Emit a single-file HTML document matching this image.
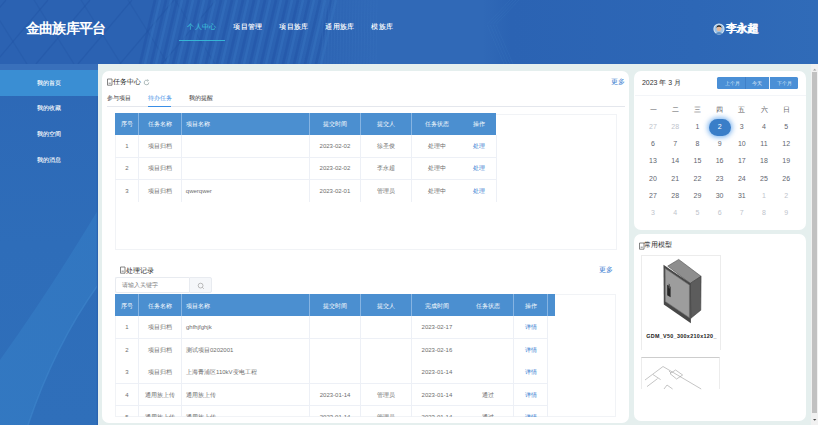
<!DOCTYPE html>
<html><head><meta charset="utf-8">
<style>
*{margin:0;padding:0;box-sizing:border-box}
html,body{width:818px;height:425px;overflow:hidden;background:#e5efee;font-family:"Liberation Sans",sans-serif;position:relative}
.abs{position:absolute}
.t{position:absolute;white-space:nowrap;line-height:1}
.ct{position:absolute;white-space:nowrap;line-height:1;text-align:center;transform:translateX(-50%)}
.card{position:absolute;background:#fff;border-radius:7px}
</style></head><body>
<div class="abs" style="left:0;top:0;width:818px;height:64px;overflow:hidden;background:linear-gradient(90deg,#2b62b2 0%,#2b62b2 36%,#3069b7 46%,#3069b7 59%,#2b63b3 62.5%,#2d67b6 85%,#306bb8 100%)">
<svg class="abs" style="left:0;top:0" width="818" height="64">
 <g fill="none">
  <path d="M-90 64 L-36 0 M-48 64 L6 0 M-6 64 L48 0 M36 64 L90 0 M78 64 L132 0 M120 64 L174 0 M162 64 L216 0" stroke="#2153a3" stroke-width="1.2" opacity="0.4"/>
  <path d="M-60 0 L-20 64 M-13 0 L27 64 M34 0 L74 64 M81 0 L121 64 M128 0 L168 64 M175 0 L215 64" stroke="#2153a3" stroke-width="1.2" opacity="0.32"/>
  <path d="M140 64 L155 0 M151 64 L166 0 M162 64 L177 0 M173 64 L188 0 M184 64 L199 0 M195 64 L210 0 M206 64 L221 0 M217 64 L232 0 M228 64 L243 0 M239 64 L254 0 M250 64 L265 0 M261 64 L276 0 M272 64 L287 0 M283 64 L298 0 M294 64 L309 0 M305 64 L320 0 M316 64 L331 0" stroke="#2152a3" stroke-width="2.6" opacity="0.45"/>
  <path d="M145 64 L160 0 M156 64 L171 0 M167 64 L182 0 M178 64 L193 0 M189 64 L204 0 M200 64 L215 0 M211 64 L226 0 M222 64 L237 0 M233 64 L248 0 M244 64 L259 0 M255 64 L270 0 M266 64 L281 0 M277 64 L292 0 M288 64 L303 0 M299 64 L314 0 M310 64 L325 0 M321 64 L336 0" stroke="#3876c0" stroke-width="2.5" opacity="0.45"/>
  <path d="M322 64 L323 0 M325 64 L326 0 M328 64 L329 0 M331 64 L332 0 M334 64 L335 0 M337 64 L338 0 M340 64 L341 0 M343 64 L344 0 M346 64 L347 0 M349 64 L350 0 M352 64 L353 0 M355 64 L356 0 M358 64 L359 0 M361 64 L362 0 M364 64 L365 0 M367 64 L368 0 M370 64 L371 0 M373 64 L374 0 M376 64 L377 0" stroke="#3a74be" stroke-width="0.8" opacity="0.45"/>
  <path d="M510 0 L487 24.5 L504 64 M513 0 L490 24.5 L507 64 M516 0 L493 24.5 L510 64 M519 0 L496 24.5 L513 64" stroke="#3a74be" stroke-width="0.8" opacity="0.4"/>
 </g>
</svg></div>
<div class="t" style="left:26px;top:20.8px;font-size:14px;color:#fff;letter-spacing:-0.8px;font-weight:bold">金曲族库平台</div>
<div class="t" style="left:187.3px;top:24px;font-size:7.1px;color:#3cb8d8;letter-spacing:0.4px;font-weight:500;text-shadow:0 0 0.5px rgba(60,184,216,0.7)">个人中心</div>
<div class="t" style="left:233.3px;top:24px;font-size:7.1px;color:#fff;letter-spacing:0.4px;font-weight:500;text-shadow:0 0 0.5px rgba(255,255,255,0.6)">项目管理</div>
<div class="t" style="left:279.3px;top:24px;font-size:7.1px;color:#fff;letter-spacing:0.4px;font-weight:500;text-shadow:0 0 0.5px rgba(255,255,255,0.6)">项目族库</div>
<div class="t" style="left:325.3px;top:24px;font-size:7.1px;color:#fff;letter-spacing:0.4px;font-weight:500;text-shadow:0 0 0.5px rgba(255,255,255,0.6)">通用族库</div>
<div class="t" style="left:371.3px;top:24px;font-size:7.1px;color:#fff;letter-spacing:0.4px;font-weight:500;text-shadow:0 0 0.5px rgba(255,255,255,0.6)">模族库</div>
<div class="abs" style="left:179px;top:40px;width:46px;height:1.2px;background:#35b5d5"></div>
<svg class="abs" style="left:713px;top:23px" width="12" height="12" viewBox="0 0 12 12">
<circle cx="6" cy="6" r="5.6" fill="#d8e6f2"/>
<circle cx="6" cy="6" r="4.6" fill="#9ec3e6"/>
<path d="M2.4 11 Q6 7.2 9.6 11 Z" fill="#5b8fc4"/>
<ellipse cx="6" cy="5.6" rx="2.3" ry="2.6" fill="#e8b896"/>
<path d="M3.5 5 Q3.6 2.2 6 2.3 Q8.5 2.2 8.5 5 Q7.5 3.6 6 3.8 Q4.5 3.6 3.5 5 Z" fill="#222"/>
</svg>
<div class="t" style="left:725.8px;top:23px;font-size:10.5px;color:#fff;font-weight:bold;letter-spacing:-0.3px;text-shadow:0.35px 0 0 #fff">李永超</div>
<svg class="abs" style="left:0;top:64px" width="98" height="361" viewBox="0 64 98 361">
<defs><linearGradient id="sg" x1="0" y1="0" x2="0" y2="1"><stop offset="0" stop-color="#2d68b6"/><stop offset="0.5" stop-color="#2e6db9"/><stop offset="1" stop-color="#2f6fba"/></linearGradient>
<linearGradient id="bg2" x1="0" y1="1" x2="1" y2="0"><stop offset="0" stop-color="#3379c2"/><stop offset="1" stop-color="#3277c1"/></linearGradient></defs>
<rect x="0" y="64" width="98" height="361" fill="url(#sg)"/>
<path d="M0 360 Q50 290 98 210 L98 285 Q55 345 28 425 L0 425 Z" fill="url(#bg2)" opacity="0.9"/>
<path d="M28 425 Q55 345 98 285" fill="none" stroke="#3d86cc" stroke-width="1.5" opacity="0.6"/>
<rect x="96.8" y="64" width="1.2" height="361" fill="#2a63b0"/>
</svg>
<div class="abs" style="left:0px;top:63.6px;width:98px;height:6.2px;background:#3970bb"></div>
<div class="abs" style="left:0px;top:70px;width:98px;height:25.6px;background:#3a8ed3"></div>
<div class="t" style="left:37px;top:79.8px;font-size:6.3px;color:#fff;font-weight:500;text-shadow:0 0 0.4px rgba(255,255,255,0.6)">我的首页</div>
<div class="t" style="left:37px;top:105.4px;font-size:6.3px;color:#fff;font-weight:500;text-shadow:0 0 0.4px rgba(255,255,255,0.6)">我的收藏</div>
<div class="t" style="left:37px;top:131.0px;font-size:6.3px;color:#fff;font-weight:500;text-shadow:0 0 0.4px rgba(255,255,255,0.6)">我的空间</div>
<div class="t" style="left:37px;top:156.60000000000002px;font-size:6.3px;color:#fff;font-weight:500;text-shadow:0 0 0.4px rgba(255,255,255,0.6)">我的消息</div>
<div class="card" style="left:102px;top:71px;width:527.3px;height:351.6px"></div>
<svg class="abs" style="left:106px;top:78px" width="8" height="8" viewBox="0 0 8 8">
<path d="M1.5 1 H6 V7.2 H1.5 Z" fill="none" stroke="#666" stroke-width="0.8"/>
<path d="M2.6 5.2 H4.8" stroke="#666" stroke-width="0.8"/>
</svg>
<div class="t" style="left:113.2px;top:78px;font-size:7.2px;color:#2a2a2a;font-weight:500">任务中心</div>
<svg class="abs" style="left:142.8px;top:78.8px" width="7" height="7" viewBox="0 0 7 7">
<path d="M5.8 3.5 A2.3 2.3 0 1 1 4.6 1.5" fill="none" stroke="#9aa" stroke-width="0.8"/>
<path d="M4 0.6 L5.6 1.4 L4.4 2.6" fill="none" stroke="#9aa" stroke-width="0.7"/>
</svg>
<div class="t" style="left:611.4px;top:78px;font-size:7px;color:#3a7fd0;">更多</div>
<div class="t" style="left:106.8px;top:94.5px;font-size:6px;color:#333;">参与项目</div>
<div class="t" style="left:147.7px;top:94.5px;font-size:6px;color:#3a8ee6;">待办任务</div>
<div class="t" style="left:188.6px;top:94.5px;font-size:6px;color:#333;">我的提醒</div>
<div class="abs" style="left:106.8px;top:106px;width:518.4px;height:1px;background:#e4e7ed"></div>
<div class="abs" style="left:147.7px;top:105.5px;width:23.7px;height:1.5px;background:#3a8ee6"></div>
<div class="abs" style="left:115.3px;top:113.5px;width:501.4px;height:136.8px;border:1px solid #f1f3f6"></div>
<div class="abs" style="left:115.2px;top:113.2px;width:381.3px;height:21.5px;background:#4b8fd0"></div>
<div class="abs" style="left:138.1px;top:113.2px;width:1px;height:21.5px;background:#86b4e2"></div>
<div class="abs" style="left:180.5px;top:113.2px;width:1px;height:21.5px;background:#86b4e2"></div>
<div class="abs" style="left:308.9px;top:113.2px;width:1px;height:21.5px;background:#86b4e2"></div>
<div class="abs" style="left:359.9px;top:113.2px;width:1px;height:21.5px;background:#86b4e2"></div>
<div class="abs" style="left:410.5px;top:113.2px;width:1px;height:21.5px;background:#86b4e2"></div>
<div class="abs" style="left:461.5px;top:113.2px;width:1px;height:21.5px;#6fa3d8"></div>
<div class="ct" style="left:126.9px;top:121.4px;font-size:6.2px;color:#fff;">序号</div>
<div class="ct" style="left:159.8px;top:121.4px;font-size:6.2px;color:#fff;">任务名称</div>
<div class="t" style="left:185.8px;top:121.4px;font-size:6.2px;color:#fff;">项目名称</div>
<div class="ct" style="left:334.9px;top:121.4px;font-size:6.2px;color:#fff;">提交时间</div>
<div class="ct" style="left:385.7px;top:121.4px;font-size:6.2px;color:#fff;">提交人</div>
<div class="ct" style="left:436.5px;top:121.4px;font-size:6.2px;color:#fff;">任务状态</div>
<div class="ct" style="left:479.25px;top:121.4px;font-size:6.2px;color:#fff;">操作</div>
<div class="ct" style="left:126.9px;top:142.89999999999998px;font-size:6px;color:#6e6e6e;">1</div>
<div class="ct" style="left:159.8px;top:142.89999999999998px;font-size:6px;color:#6e6e6e;">项目归档</div>
<div class="ct" style="left:334.9px;top:142.89999999999998px;font-size:6px;color:#6e6e6e;">2023-02-02</div>
<div class="ct" style="left:385.7px;top:142.89999999999998px;font-size:6px;color:#6e6e6e;">徐圣俊</div>
<div class="ct" style="left:436.5px;top:142.89999999999998px;font-size:6px;color:#6e6e6e;">处理中</div>
<div class="ct" style="left:479.25px;top:142.89999999999998px;font-size:6px;color:#3a80d2;">处理</div>
<div class="abs" style="left:115.2px;top:156.5px;width:381.3px;height:1px;background:#edf0f6"></div>
<div class="ct" style="left:126.9px;top:165.2px;font-size:6px;color:#6e6e6e;">2</div>
<div class="ct" style="left:159.8px;top:165.2px;font-size:6px;color:#6e6e6e;">项目归档</div>
<div class="ct" style="left:334.9px;top:165.2px;font-size:6px;color:#6e6e6e;">2023-02-02</div>
<div class="ct" style="left:385.7px;top:165.2px;font-size:6px;color:#6e6e6e;">李永超</div>
<div class="ct" style="left:436.5px;top:165.2px;font-size:6px;color:#6e6e6e;">处理中</div>
<div class="ct" style="left:479.25px;top:165.2px;font-size:6px;color:#3a80d2;">处理</div>
<div class="abs" style="left:115.2px;top:178.8px;width:381.3px;height:1px;background:#edf0f6"></div>
<div class="ct" style="left:126.9px;top:187.5px;font-size:6px;color:#6e6e6e;">3</div>
<div class="ct" style="left:159.8px;top:187.5px;font-size:6px;color:#6e6e6e;">项目归档</div>
<div class="t" style="left:185.8px;top:187.5px;font-size:6px;color:#6e6e6e;">qwerqwer</div>
<div class="ct" style="left:334.9px;top:187.5px;font-size:6px;color:#6e6e6e;">2023-02-01</div>
<div class="ct" style="left:385.7px;top:187.5px;font-size:6px;color:#6e6e6e;">管理员</div>
<div class="ct" style="left:436.5px;top:187.5px;font-size:6px;color:#6e6e6e;">处理中</div>
<div class="ct" style="left:479.25px;top:187.5px;font-size:6px;color:#3a80d2;">处理</div>
<div class="abs" style="left:138.1px;top:134.7px;width:1px;height:66.9px;background:#edf0f6"></div>
<div class="abs" style="left:180.5px;top:134.7px;width:1px;height:66.9px;background:#edf0f6"></div>
<div class="abs" style="left:308.9px;top:134.7px;width:1px;height:66.9px;background:#edf0f6"></div>
<div class="abs" style="left:359.9px;top:134.7px;width:1px;height:66.9px;background:#edf0f6"></div>
<div class="abs" style="left:410.5px;top:134.7px;width:1px;height:66.9px;background:#edf0f6"></div>
<div class="abs" style="left:496.0px;top:134.7px;width:1px;height:66.9px;background:#edf0f6"></div>
<svg class="abs" style="left:119px;top:266.3px" width="8" height="8" viewBox="0 0 8 8">
<path d="M1.5 1 H6 V7.2 H1.5 Z" fill="none" stroke="#666" stroke-width="0.8"/>
<path d="M2.6 5.2 H4.8" stroke="#666" stroke-width="0.8"/>
</svg>
<div class="t" style="left:598.6px;top:266.2px;font-size:7px;color:#3a80d2;">更多</div>
<div class="t" style="left:126.2px;top:266.5px;font-size:7px;color:#2a2a2a;font-weight:500">处理记录</div>
<div class="abs" style="left:115.3px;top:277.2px;width:73.8px;height:15.8px;border:1px solid #e8ebf0;border-right:none;border-radius:2px 0 0 2px;background:#fff"></div>
<div class="abs" style="left:188.6px;top:277.2px;width:23.9px;height:15.8px;background:#f5f7fa;border:1px solid #e8ebf0;border-radius:0 2px 2px 0"></div>
<div class="t" style="left:122px;top:282px;font-size:6px;color:#808080;">请输入关键字</div>
<svg class="abs" style="left:197px;top:281.5px" width="8" height="8" viewBox="0 0 8 8">
<circle cx="3.6" cy="3.6" r="2.4" fill="none" stroke="#aaa" stroke-width="0.8"/>
<path d="M5.3 5.3 L6.8 6.8" stroke="#aaa" stroke-width="0.8"/>
</svg>
<div class="abs" style="left:115.3px;top:294.0px;width:501.0px;height:123.0px;border:1px solid #f1f3f6"></div>
<div class="abs" style="left:115.2px;top:294.3px;width:439.50000000000006px;height:21.9px;background:#4b8fd0"></div>
<div class="abs" style="left:138.1px;top:294.3px;width:1px;height:21.9px;background:#86b4e2"></div>
<div class="abs" style="left:180.7px;top:294.3px;width:1px;height:21.9px;background:#86b4e2"></div>
<div class="abs" style="left:309.0px;top:294.3px;width:1px;height:21.9px;background:#86b4e2"></div>
<div class="abs" style="left:360.2px;top:294.3px;width:1px;height:21.9px;background:#86b4e2"></div>
<div class="abs" style="left:410.9px;top:294.3px;width:1px;height:21.9px;background:#86b4e2"></div>
<div class="abs" style="left:513.1px;top:294.3px;width:1px;height:21.9px;background:#86b4e2"></div>
<div class="abs" style="left:547.2px;top:294.3px;width:1px;height:21.9px;background:#86b4e2"></div>
<div class="ct" style="left:126.9px;top:302.5px;font-size:6.2px;color:#fff;">序号</div>
<div class="ct" style="left:159.89999999999998px;top:302.5px;font-size:6.2px;color:#fff;">任务名称</div>
<div class="t" style="left:186.0px;top:302.5px;font-size:6.2px;color:#fff;">项目名称</div>
<div class="ct" style="left:335.1px;top:302.5px;font-size:6.2px;color:#fff;">提交时间</div>
<div class="ct" style="left:386.04999999999995px;top:302.5px;font-size:6.2px;color:#fff;">提交人</div>
<div class="ct" style="left:436.95px;top:302.5px;font-size:6.2px;color:#fff;">完成时间</div>
<div class="ct" style="left:488.05px;top:302.5px;font-size:6.2px;color:#fff;">任务状态</div>
<div class="ct" style="left:530.6500000000001px;top:302.5px;font-size:6.2px;color:#fff;">操作</div>
<div class="abs" style="left:115px;top:316.2px;width:502px;height:101px;overflow:hidden">
<div class="ct" style="left:11.900000000000006px;top:8.2px;font-size:6px;color:#6e6e6e;">1</div>
<div class="ct" style="left:44.89999999999998px;top:8.2px;font-size:6px;color:#6e6e6e;">项目归档</div>
<div class="t" style="left:71.0px;top:8.2px;font-size:6px;color:#6e6e6e;">ghfhjfghjk</div>
<div class="ct" style="left:321.95px;top:8.2px;font-size:6px;color:#6e6e6e;">2023-02-17</div>
<div class="ct" style="left:415.6500000000001px;top:8.2px;font-size:6px;color:#3a80d2;">详情</div>
<div class="abs" style="left:0.20000000000000284px;top:21.8px;width:432.50000000000006px;height:1px;background:#edf0f6"></div>
<div class="ct" style="left:11.900000000000006px;top:30.5px;font-size:6px;color:#6e6e6e;">2</div>
<div class="ct" style="left:44.89999999999998px;top:30.5px;font-size:6px;color:#6e6e6e;">项目归档</div>
<div class="t" style="left:71.0px;top:30.5px;font-size:6px;color:#6e6e6e;">测试项目0202001</div>
<div class="ct" style="left:321.95px;top:30.5px;font-size:6px;color:#6e6e6e;">2023-02-16</div>
<div class="ct" style="left:415.6500000000001px;top:30.5px;font-size:6px;color:#3a80d2;">详情</div>
<div class="ct" style="left:11.900000000000006px;top:53.3px;font-size:6px;color:#6e6e6e;">3</div>
<div class="ct" style="left:44.89999999999998px;top:53.3px;font-size:6px;color:#6e6e6e;">项目归档</div>
<div class="t" style="left:71.0px;top:53.3px;font-size:6px;color:#6e6e6e;">上海青浦区110kV变电工程</div>
<div class="ct" style="left:321.95px;top:53.3px;font-size:6px;color:#6e6e6e;">2023-01-14</div>
<div class="ct" style="left:415.6500000000001px;top:53.3px;font-size:6px;color:#3a80d2;">详情</div>
<div class="abs" style="left:0.20000000000000284px;top:66.9px;width:432.50000000000006px;height:1px;background:#edf0f6"></div>
<div class="ct" style="left:11.900000000000006px;top:75.60000000000001px;font-size:6px;color:#6e6e6e;">4</div>
<div class="ct" style="left:44.89999999999998px;top:75.60000000000001px;font-size:6px;color:#6e6e6e;">通用族上传</div>
<div class="t" style="left:71.0px;top:75.60000000000001px;font-size:6px;color:#6e6e6e;">通用族上传</div>
<div class="ct" style="left:220.10000000000002px;top:75.60000000000001px;font-size:6px;color:#6e6e6e;">2023-01-14</div>
<div class="ct" style="left:271.04999999999995px;top:75.60000000000001px;font-size:6px;color:#6e6e6e;">管理员</div>
<div class="ct" style="left:321.95px;top:75.60000000000001px;font-size:6px;color:#6e6e6e;">2023-01-14</div>
<div class="ct" style="left:373.05px;top:75.60000000000001px;font-size:6px;color:#6e6e6e;">通过</div>
<div class="ct" style="left:415.6500000000001px;top:75.60000000000001px;font-size:6px;color:#3a80d2;">详情</div>
<div class="abs" style="left:0.20000000000000284px;top:89.2px;width:432.50000000000006px;height:1px;background:#edf0f6"></div>
<div class="ct" style="left:11.900000000000006px;top:97.9px;font-size:6px;color:#6e6e6e;">5</div>
<div class="ct" style="left:44.89999999999998px;top:97.9px;font-size:6px;color:#6e6e6e;">通用族上传</div>
<div class="t" style="left:71.0px;top:97.9px;font-size:6px;color:#6e6e6e;">通用族上传</div>
<div class="ct" style="left:220.10000000000002px;top:97.9px;font-size:6px;color:#6e6e6e;">2023-01-14</div>
<div class="ct" style="left:271.04999999999995px;top:97.9px;font-size:6px;color:#6e6e6e;">管理员</div>
<div class="ct" style="left:321.95px;top:97.9px;font-size:6px;color:#6e6e6e;">2023-01-14</div>
<div class="ct" style="left:373.05px;top:97.9px;font-size:6px;color:#6e6e6e;">通过</div>
<div class="ct" style="left:415.6500000000001px;top:97.9px;font-size:6px;color:#3a80d2;">详情</div>
<div class="abs" style="left:0.20000000000000284px;top:111.5px;width:432.50000000000006px;height:1px;background:#edf0f6"></div>
<div class="abs" style="left:23.099999999999994px;top:0px;width:1px;height:120px;background:#edf0f6"></div>
<div class="abs" style="left:65.69999999999999px;top:0px;width:1px;height:120px;background:#edf0f6"></div>
<div class="abs" style="left:194.0px;top:0px;width:1px;height:120px;background:#edf0f6"></div>
<div class="abs" style="left:245.2px;top:0px;width:1px;height:120px;background:#edf0f6"></div>
<div class="abs" style="left:295.9px;top:0px;width:1px;height:120px;background:#edf0f6"></div>
<div class="abs" style="left:398.1px;top:0px;width:1px;height:120px;background:#edf0f6"></div>
<div class="abs" style="left:432.20000000000005px;top:0px;width:1px;height:120px;background:#edf0f6"></div>
</div>
<div class="card" style="left:634px;top:71px;width:172px;height:159.3px"></div>
<div class="t" style="left:641.9px;top:78.5px;font-size:7px;color:#333;">2023 年 3 月</div>
<div class="abs" style="left:717.2px;top:76.9px;width:80.5px;height:11.8px;background:#4a8fd6;border-radius:1.5px"></div>
<div class="abs" style="left:745.0px;top:76.9px;width:0.6px;height:11.8px;background:#3f80c8"></div>
<div class="abs" style="left:769.0px;top:76.9px;width:0.8px;height:11.8px;background:#e9f1fa"></div>
<div class="ct" style="left:732.1px;top:80.6px;font-size:5px;color:#d8e6f6;">上个月</div>
<div class="ct" style="left:757.2px;top:80.6px;font-size:5px;color:#eef4fb;">今天</div>
<div class="ct" style="left:784.4px;top:80.6px;font-size:5px;color:#d8e6f6;">下个月</div>
<div class="abs" style="left:635px;top:95.1px;width:171px;height:1px;background:#f3f5f8"></div>
<div class="ct" style="left:653.0px;top:106.8px;font-size:6.6px;color:#606266;">一</div>
<div class="ct" style="left:675.2px;top:106.8px;font-size:6.6px;color:#606266;">二</div>
<div class="ct" style="left:697.4px;top:106.8px;font-size:6.6px;color:#606266;">三</div>
<div class="ct" style="left:719.6px;top:106.8px;font-size:6.6px;color:#606266;">四</div>
<div class="ct" style="left:741.8px;top:106.8px;font-size:6.6px;color:#606266;">五</div>
<div class="ct" style="left:764.0px;top:106.8px;font-size:6.6px;color:#606266;">六</div>
<div class="ct" style="left:786.2px;top:106.8px;font-size:6.6px;color:#606266;">日</div>
<div class="abs" style="left:708.7px;top:118.7px;width:22.6px;height:17.5px;border-radius:9px;background:#3a7ec8;box-shadow:0 0 5px 1.5px rgba(90,160,235,0.75)"></div>
<div class="ct" style="left:653.0px;top:123.0px;font-size:7px;color:#c0c4cc;">27</div>
<div class="ct" style="left:675.2px;top:123.0px;font-size:7px;color:#c0c4cc;">28</div>
<div class="ct" style="left:697.4px;top:123.0px;font-size:7px;color:#62666f;">1</div>
<div class="ct" style="left:719.6px;top:123.0px;font-size:7px;color:#fff;">2</div>
<div class="ct" style="left:741.8px;top:123.0px;font-size:7px;color:#62666f;">3</div>
<div class="ct" style="left:764.0px;top:123.0px;font-size:7px;color:#62666f;">4</div>
<div class="ct" style="left:786.2px;top:123.0px;font-size:7px;color:#62666f;">5</div>
<div class="ct" style="left:653.0px;top:140.20000000000002px;font-size:7px;color:#62666f;">6</div>
<div class="ct" style="left:675.2px;top:140.20000000000002px;font-size:7px;color:#62666f;">7</div>
<div class="ct" style="left:697.4px;top:140.20000000000002px;font-size:7px;color:#62666f;">8</div>
<div class="ct" style="left:719.6px;top:140.20000000000002px;font-size:7px;color:#62666f;">9</div>
<div class="ct" style="left:741.8px;top:140.20000000000002px;font-size:7px;color:#62666f;">10</div>
<div class="ct" style="left:764.0px;top:140.20000000000002px;font-size:7px;color:#62666f;">11</div>
<div class="ct" style="left:786.2px;top:140.20000000000002px;font-size:7px;color:#62666f;">12</div>
<div class="ct" style="left:653.0px;top:157.4px;font-size:7px;color:#62666f;">13</div>
<div class="ct" style="left:675.2px;top:157.4px;font-size:7px;color:#62666f;">14</div>
<div class="ct" style="left:697.4px;top:157.4px;font-size:7px;color:#62666f;">15</div>
<div class="ct" style="left:719.6px;top:157.4px;font-size:7px;color:#62666f;">16</div>
<div class="ct" style="left:741.8px;top:157.4px;font-size:7px;color:#62666f;">17</div>
<div class="ct" style="left:764.0px;top:157.4px;font-size:7px;color:#62666f;">18</div>
<div class="ct" style="left:786.2px;top:157.4px;font-size:7px;color:#62666f;">19</div>
<div class="ct" style="left:653.0px;top:174.6px;font-size:7px;color:#62666f;">20</div>
<div class="ct" style="left:675.2px;top:174.6px;font-size:7px;color:#62666f;">21</div>
<div class="ct" style="left:697.4px;top:174.6px;font-size:7px;color:#62666f;">22</div>
<div class="ct" style="left:719.6px;top:174.6px;font-size:7px;color:#62666f;">23</div>
<div class="ct" style="left:741.8px;top:174.6px;font-size:7px;color:#62666f;">24</div>
<div class="ct" style="left:764.0px;top:174.6px;font-size:7px;color:#62666f;">25</div>
<div class="ct" style="left:786.2px;top:174.6px;font-size:7px;color:#62666f;">26</div>
<div class="ct" style="left:653.0px;top:191.8px;font-size:7px;color:#62666f;">27</div>
<div class="ct" style="left:675.2px;top:191.8px;font-size:7px;color:#62666f;">28</div>
<div class="ct" style="left:697.4px;top:191.8px;font-size:7px;color:#62666f;">29</div>
<div class="ct" style="left:719.6px;top:191.8px;font-size:7px;color:#62666f;">30</div>
<div class="ct" style="left:741.8px;top:191.8px;font-size:7px;color:#62666f;">31</div>
<div class="ct" style="left:764.0px;top:191.8px;font-size:7px;color:#c0c4cc;">1</div>
<div class="ct" style="left:786.2px;top:191.8px;font-size:7px;color:#c0c4cc;">2</div>
<div class="ct" style="left:653.0px;top:209.0px;font-size:7px;color:#c0c4cc;">3</div>
<div class="ct" style="left:675.2px;top:209.0px;font-size:7px;color:#c0c4cc;">4</div>
<div class="ct" style="left:697.4px;top:209.0px;font-size:7px;color:#c0c4cc;">5</div>
<div class="ct" style="left:719.6px;top:209.0px;font-size:7px;color:#c0c4cc;">6</div>
<div class="ct" style="left:741.8px;top:209.0px;font-size:7px;color:#c0c4cc;">7</div>
<div class="ct" style="left:764.0px;top:209.0px;font-size:7px;color:#c0c4cc;">8</div>
<div class="ct" style="left:786.2px;top:209.0px;font-size:7px;color:#c0c4cc;">9</div>
<div class="card" style="left:634px;top:234px;width:172px;height:186.5px"></div>
<svg class="abs" style="left:637.5px;top:241.8px" width="8" height="8" viewBox="0 0 8 8">
<path d="M1.5 1 H6 V7.2 H1.5 Z" fill="none" stroke="#666" stroke-width="0.8"/>
<path d="M2.6 5.2 H4.8" stroke="#666" stroke-width="0.8"/>
</svg>
<div class="t" style="left:644.3px;top:242px;font-size:6.8px;color:#2a2a2a;font-weight:500">常用模型</div>
<div class="abs" style="left:641.3px;top:255px;width:79.4px;height:95px;border:1px solid #ececec;border-bottom:none"></div>
<svg class="abs" style="left:641px;top:255px" width="80" height="95" viewBox="641 255 80 95">
<path d="M667.7 266.1 L678.7 259.4 L701.1 276.3 L690.3 283.4 Z" fill="#8e8e8e" stroke="#3a3a3a" stroke-width="0.5"/>
<path d="M690.3 283.4 L701.1 276.3 L700.8 310.2 L690.9 318.3 Z" fill="#5c5c5c" stroke="#333" stroke-width="0.5"/>
<path d="M663.5 264.8 L690.9 283.4 L690.9 323.3 L663.8 304.6 Z" fill="#474747"/>
<path d="M665.2 268.5 L689.4 285.1 L689.4 317.7 L665.3 301.4 Z" fill="#9d9d9d" stroke="#707070" stroke-width="0.6"/>
<path d="M667.2 284.8 L670.6 286.8 L670.6 297.3 L667.2 295.3 Z" fill="#262626"/>
<path d="M668.6 283.4 L669.9 284.3 L669.9 288.8 L668.6 288.0 Z" fill="#555"/>
</svg>
<div class="t" style="left:646.2px;top:334.2px;font-size:5.4px;color:#222;font-weight:bold;letter-spacing:0.32px">GDM_V50_300x210x120_</div>
<div class="abs" style="left:641.3px;top:357.2px;width:79.2px;height:32px;border:1px solid #ececec;border-top:1.5px solid #cdcdcd;border-bottom:none"></div>
<svg class="abs" style="left:641px;top:357px" width="80" height="33" viewBox="641 357 80 33">
<g stroke="#8a8a8a" stroke-width="0.5" fill="none">
<path d="M645 380 L663 366.5 L701.2 389"/>
<path d="M670 373.6 L675.6 370 L682.6 375 L676.6 379 Z"/>
<path d="M653 374.6 L660.6 379.6 M647 386.6 L657.6 378.6 M664 389 L667 385 L672.6 389 M669 371 L671 373"/>
</g></svg>
<div class="abs" style="left:810.6px;top:64px;width:7.4px;height:361px;background:#f1f1f1"></div>
<div class="abs" style="left:811.8px;top:72.2px;width:5px;height:340.8px;background:#c1c1c1"></div>
<svg class="abs" style="left:810.6px;top:64px" width="8" height="361"><path d="M2 6.5 L3.7 4.8 L5.4 6.5 Z" fill="#a3a3a3"/><path d="M2 355 L3.7 356.7 L5.4 355 Z" fill="#505050"/></svg>
</body></html>
